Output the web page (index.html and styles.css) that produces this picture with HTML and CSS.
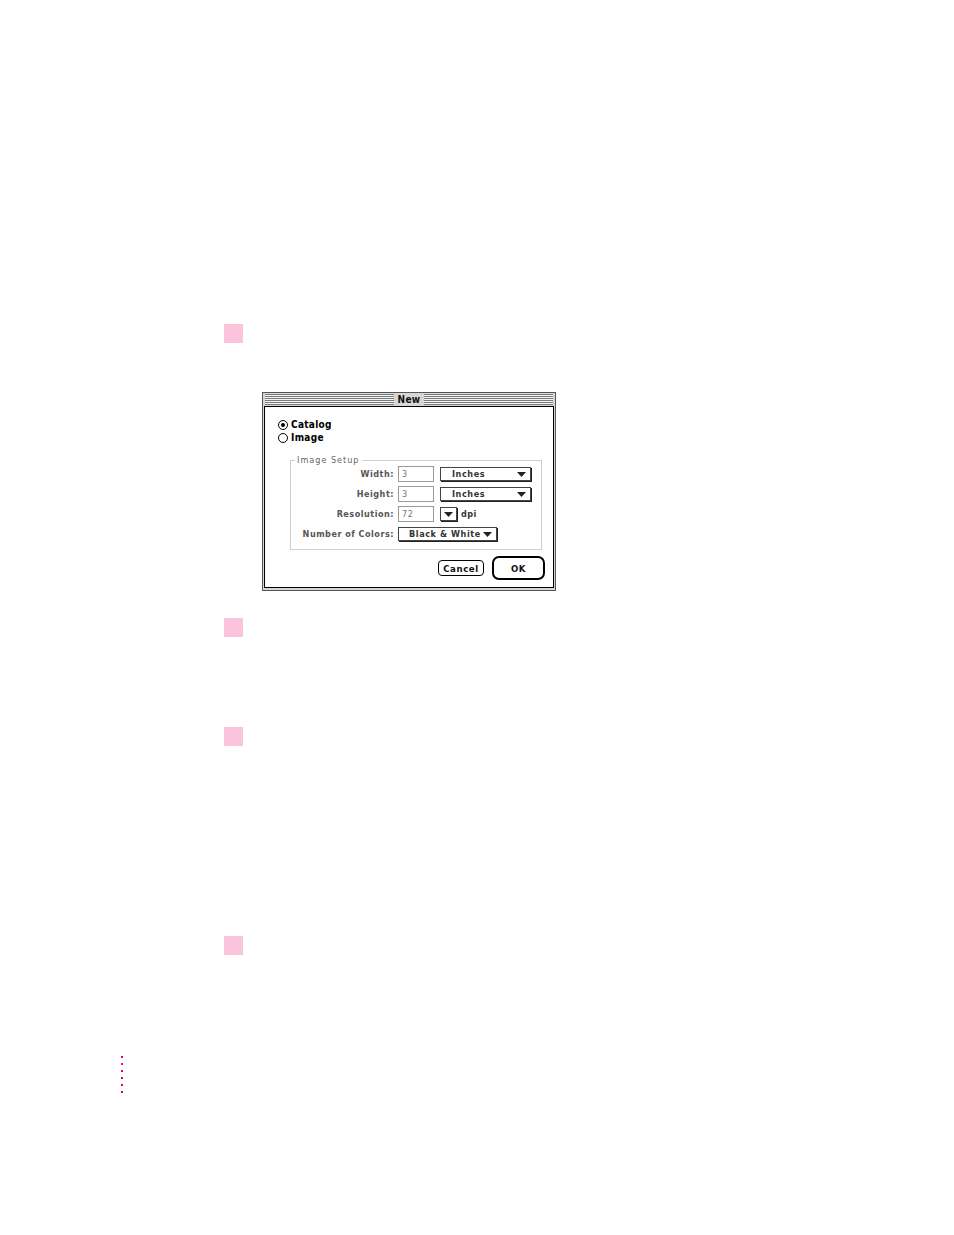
FILE: index.html
```html
<!DOCTYPE html>
<html>
<head>
<meta charset="utf-8">
<link rel="stylesheet" href="styles.css">
</head>
<body>
<div class="page">
  <div class="step"></div>
  <div class="win">
    <div class="titlebar">
      <span class="stripes"></span>
      <span class="title">New</span>
      <span class="stripes"></span>
    </div>
    <div class="content">
      <div class="radios">
        <div class="radio-row"><span class="radio on"></span><span class="rlabel">Catalog</span></div>
        <div class="radio-row"><span class="radio"></span><span class="rlabel">Image</span></div>
      </div>
      <div class="group">
        <span class="legend">Image Setup</span>
        <div class="grid">
          <span class="lbl">Width:</span>
          <div class="frow">
            <span class="field">3</span>
            <span class="popup wide"><span class="ptext">Inches</span><svg class="arrow" width="9" height="5" viewBox="0 0 9 5"><path d="M0 0H9L4.5 5Z" fill="#222"/></svg></span>
          </div>
          <span class="lbl">Height:</span>
          <div class="frow">
            <span class="field">3</span>
            <span class="popup wide"><span class="ptext">Inches</span><svg class="arrow" width="9" height="5" viewBox="0 0 9 5"><path d="M0 0H9L4.5 5Z" fill="#222"/></svg></span>
          </div>
          <span class="lbl">Resolution:</span>
          <div class="frow">
            <span class="field">72</span>
            <span class="popup small"><svg width="9" height="5" viewBox="0 0 9 5"><path d="M0 0H9L4.5 5Z" fill="#222"/></svg></span>
            <span class="unit">dpi</span>
          </div>
          <span class="lbl">Number of Colors:</span>
          <div class="frow">
            <span class="popup colors"><span class="ptext">Black &amp; White</span><svg class="arrow" width="9" height="5" viewBox="0 0 9 5"><path d="M0 0H9L4.5 5Z" fill="#222"/></svg></span>
          </div>
        </div>
      </div>
      <div class="buttons">
        <span class="btn cancel">Cancel</span>
        <span class="ring"><span class="btn ok">OK</span></span>
      </div>
    </div>
  </div>
  <div class="step s2"></div>
  <div class="step s3"></div>
  <div class="step s4"></div>
  <div class="dots">
    <span></span><span></span><span></span><span></span><span></span><span></span>
  </div>
</div>
</body>
</html>
```
FILE: styles.css
```css
html, body {
  margin: 0;
  padding: 0;
  background: #fff;
}
.page {
  width: 954px;
  height: 1235px;
  box-sizing: border-box;
  padding-top: 324px;
  font-family: "DejaVu Sans Condensed", "DejaVu Sans", sans-serif;
  font-stretch: condensed;
}
.step {
  width: 19px;
  height: 19px;
  background: #f9c4dc;
  margin-left: 224px;
}
.s2 { margin-top: 27px; }
.s3 { margin-top: 90px; }
.s4 { margin-top: 190px; }

.dots {
  margin: 101px 0 0 121px;
  display: flex;
  flex-direction: column;
  gap: 5px;
}
.dots span {
  width: 2px;
  height: 2px;
  background: #e4007c;
}

/* dialog window */
.win {
  margin: 49px 0 0 262px;
  width: 294px;
  height: 199px;
  box-sizing: border-box;
  border: 1px solid #555;
  background: #d6d6d6;
  padding: 0 1px 2px 1px;
  display: flex;
  flex-direction: column;
}
.titlebar {
  height: 13px;
  display: flex;
  align-items: center;
  padding: 0 1px;
}
.stripes {
  flex: 1;
  height: 11px;
  background: repeating-linear-gradient(to bottom, #7a7a7a 0 1px, #f2f2f2 1px 2px);
}
.title {
  padding: 0 4px;
  font-size: 10px;
  font-weight: bold;
  color: #111;
  line-height: 13px;
  letter-spacing: 0.3px;
}
.content {
  flex: 1;
  background: #fff;
  border: 1px solid #000;
  padding: 12px 8px 0 13px;
  display: flex;
  flex-direction: column;
}
.radios {
  display: flex;
  flex-direction: column;
  gap: 2px;
}
.radio-row {
  display: flex;
  align-items: center;
  height: 11px;
  gap: 3px;
}
.radio {
  width: 10px;
  height: 10px;
  box-sizing: border-box;
  border: 1px solid #000;
  border-radius: 50%;
  display: flex;
  align-items: center;
  justify-content: center;
}
.radio.on::after {
  content: "";
  width: 4px;
  height: 4px;
  border-radius: 50%;
  background: #000;
}
.rlabel {
  font-size: 10px;
  font-weight: bold;
  color: #000;
  letter-spacing: 0.3px;
}

/* group box */
.group {
  position: relative;
  margin: 17px 3px 0 12px;
  border: 1px solid #cfcfcf;
  padding: 5px 0 7px 10px;
}
.legend {
  position: absolute;
  top: -7px;
  left: 4px;
  background: #fff;
  padding: 0 2px;
  font-size: 9px;
  line-height: 12px;
  color: #666;
  letter-spacing: 1px;
}
.grid {
  display: grid;
  grid-template-columns: 93px 1fr;
  column-gap: 4px;
  row-gap: 4px;
  align-items: center;
}
.lbl {
  text-align: right;
  font-size: 9px;
  font-weight: bold;
  color: #555;
  letter-spacing: 0.5px;
  white-space: nowrap;
}
.frow {
  display: flex;
  align-items: center;
  height: 16px;
}
.field {
  width: 36px;
  height: 16px;
  box-sizing: border-box;
  border: 1px solid #9a9a9a;
  padding-left: 3px;
  font-size: 9px;
  line-height: 14px;
  color: #777;
  letter-spacing: 0.5px;
}
.popup {
  height: 14px;
  box-sizing: border-box;
  border: 1px solid #444;
  box-shadow: 1px 1px 0 #222;
  display: flex;
  align-items: center;
  background: #fff;
}
.ptext {
  font-size: 9px;
  font-weight: bold;
  color: #333;
  letter-spacing: 0.6px;
}
.arrow {
  margin-left: auto;
  margin-right: 4px;
}
.wide {
  width: 91px;
  margin-left: 6px;
  padding-left: 11px;
}
.small {
  width: 17px;
  margin-left: 6px;
  justify-content: center;
}
.unit {
  margin-left: 4px;
  font-size: 9px;
  font-weight: bold;
  color: #333;
  letter-spacing: 0.5px;
}
.colors {
  width: 99px;
  padding-left: 10px;
}

/* buttons */
.buttons {
  margin-top: 6px;
  display: flex;
  justify-content: flex-end;
  align-items: center;
  gap: 8px;
}
.btn {
  display: flex;
  align-items: center;
  justify-content: center;
  box-sizing: border-box;
  font-size: 9.5px;
  font-weight: bold;
  color: #111;
  letter-spacing: 0.6px;
}
.cancel {
  width: 46px;
  height: 16px;
  border: 1px solid #000;
  border-right-width: 1.5px;
  border-bottom-width: 1.5px;
  border-radius: 4px;
}
.ring {
  width: 53px;
  height: 24px;
  box-sizing: border-box;
  border: 2.5px solid #000;
  border-radius: 7px;
  display: flex;
  align-items: center;
  justify-content: center;
}
.ok {
  width: 100%;
  height: 100%;
}
```
